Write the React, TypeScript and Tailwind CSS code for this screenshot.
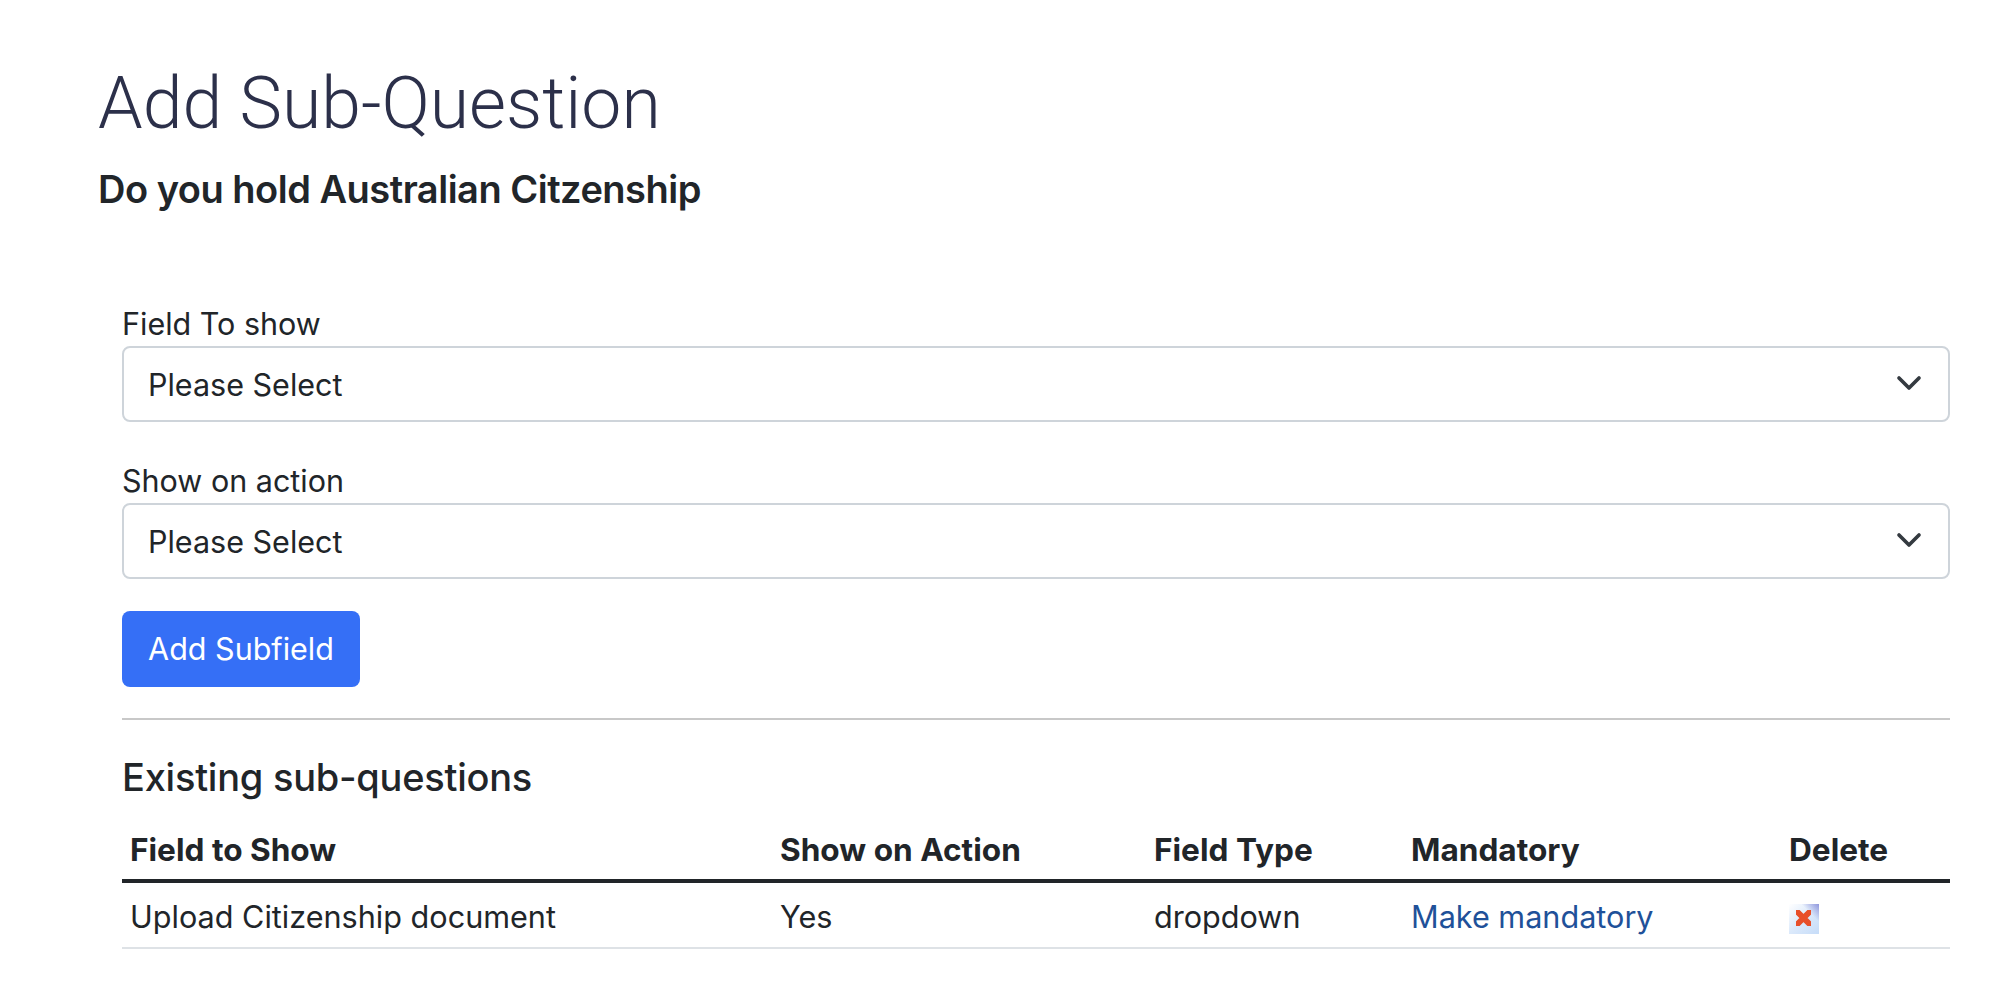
import { ChevronDown } from "lucide-react";

const font = "font-['Inter','Liberation_Sans',sans-serif]";

function SelectField({ label }: { label: string }) {
  return (
    <div className="pt-[4px] pb-[32px]">
      <label className="block text-[30.5px] leading-[45px] text-[#212529]">{label}</label>
      <div className="relative">
        <select className="block w-full h-[76px] appearance-none rounded-[8px] border-2 border-[#ced4da] bg-white pl-[24px] pr-[72px] pt-[2px] text-[30.5px] text-[#212529] outline-none">
          <option>Please Select</option>
        </select>
        <ChevronDown className="absolute right-[21px] top-[17px] w-[40px] h-[40px] text-[#343a40] pointer-events-none" strokeWidth={2.2} />
      </div>
    </div>
  );
}

function DeleteIcon() {
  return (
    <svg width="30" height="30" viewBox="0 0 30 30" className="block">
      <defs>
        <linearGradient id="delBg" x1="0" y1="0" x2="1" y2="1">
          <stop offset="0" stopColor="#ffffff" />
          <stop offset="0.5" stopColor="#dbe9fb" />
          <stop offset="1" stopColor="#c6dcf8" />
        </linearGradient>
        <linearGradient id="delCorner" x1="1" y1="0" x2="0.7" y2="0.3">
          <stop offset="0" stopColor="#8f96dc" />
          <stop offset="1" stopColor="#8f96dc" stopOpacity="0" />
        </linearGradient>
        <filter id="delSoft">
          <feGaussianBlur stdDeviation="0.5" />
        </filter>
      </defs>
      <rect width="30" height="30" fill="url(#delBg)" />
      <rect width="30" height="30" fill="url(#delCorner)" />
      <path d="M8.5 8 L20.5 20 M20.5 8 L8.5 20" stroke="#e8502a" strokeWidth="6" strokeLinecap="round" filter="url(#delSoft)" />
    </svg>
  );
}

export default function App() {
  return (
    <div className={`${font} min-h-screen bg-white text-[#212529] pl-[98px] pr-[46px] pt-[61px]`}>
      <h1 className="font-['Roboto',sans-serif] font-light text-[71.5px] leading-[86px] text-[#2c304a]">Add Sub-Question</h1>
      <h2 className="mt-[20px] text-[38px] leading-[44px] font-semibold tracking-[-0.5px]">Do you hold Australian Citzenship</h2>

      <div className="pl-[24px] mt-[86px]">
        <SelectField label="Field To show" />
        <SelectField label="Show on action" />
        <button className="h-[76px] w-[238px] rounded-[8px] bg-[#356ff6] text-white text-[30.5px]">Add Subfield</button>
        <hr className="mt-[31px] border-t-2 border-[#c8c8c8]" />
        <h3 className="mt-[35px] text-[38px] leading-[44px] font-medium tracking-[-0.25px]">Existing sub-questions</h3>

        <table className="mt-[22px] w-full table-fixed text-[30.6px] border-collapse">
          <colgroup>
            <col className="w-[650px]" />
            <col className="w-[374px]" />
            <col className="w-[257px]" />
            <col className="w-[378px]" />
            <col />
          </colgroup>
          <thead>
            <tr className="border-b-4 border-[#212529]">
              {["Field to Show", "Show on Action", "Field Type", "Mandatory", "Delete"].map((h) => (
                <th key={h} className="h-[60px] px-[8px] text-left font-bold text-[31.6px]">{h}</th>
              ))}
            </tr>
          </thead>
          <tbody>
            <tr className="border-b-2 border-[#dee2e6]">
              <td className="h-[67px] px-[8px] pt-[3px]">Upload Citizenship document</td>
              <td className="px-[8px] pt-[3px]">Yes</td>
              <td className="px-[8px] pt-[3px]">dropdown</td>
              <td className="px-[8px] pt-[3px]"><a href="#" className="text-[#1f5199]">Make mandatory</a></td>
              <td className="px-[8px] pt-[7px]"><DeleteIcon /></td>
            </tr>
          </tbody>
        </table>
      </div>
    </div>
  );
}
